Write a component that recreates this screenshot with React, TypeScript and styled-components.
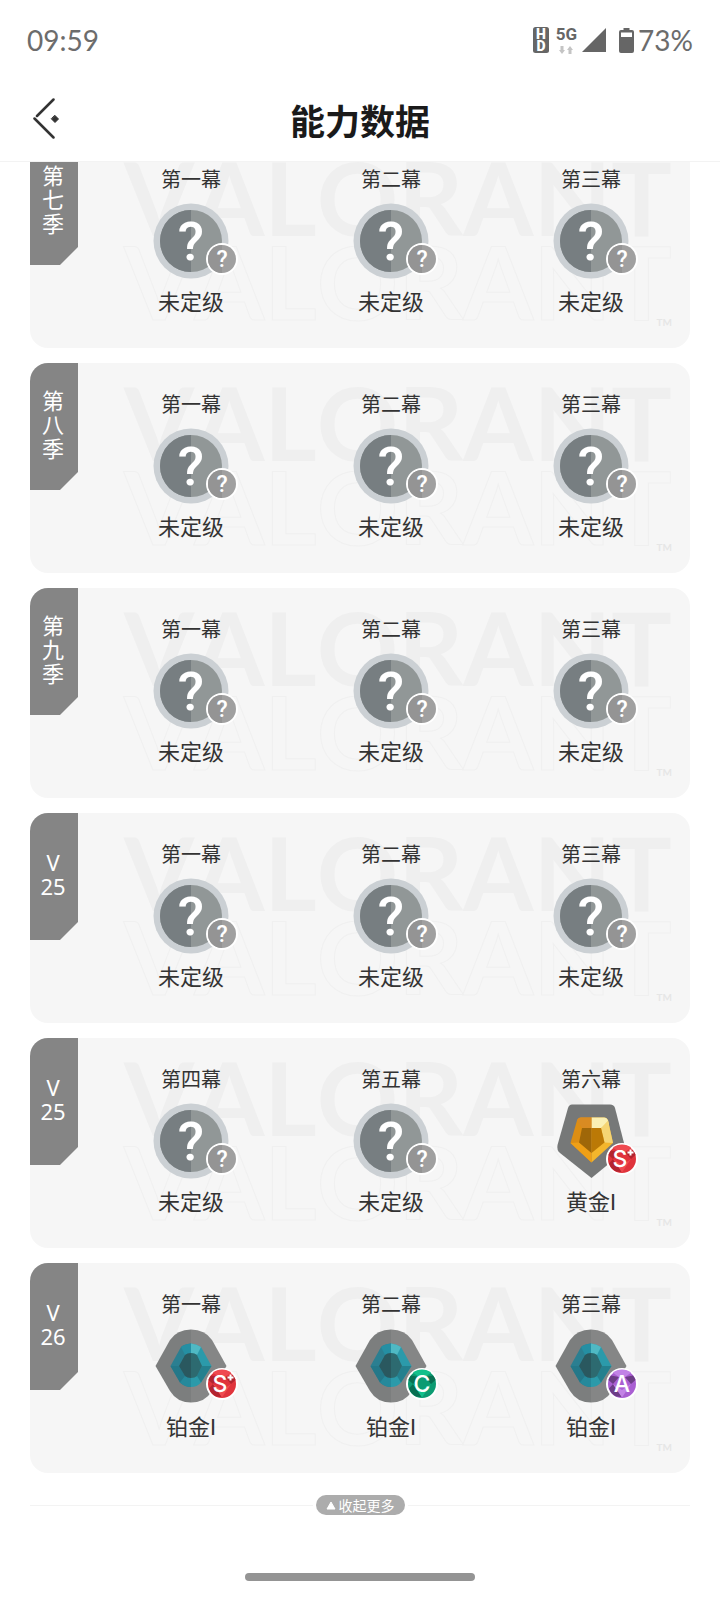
import React from "react";
import styled, { createGlobalStyle } from "styled-components";

const cjk = `"Noto Sans CJK SC", sans-serif`;

const GlobalStyle = createGlobalStyle`
  *, *::before, *::after { box-sizing: border-box; }
  body { margin: 0; background: #fff; color: #333; font-family: ${cjk}; }
  h1, h2, p { margin: 0; font-weight: 400; }
  svg { display: block; }
`;

const Screen = styled.div`
  min-height: 100vh;
  display: flex;
  flex-direction: column;
  background: #fff;
`;

const StatusBar = styled.div`
  display: flex;
  align-items: center;
  justify-content: space-between;
  height: 80px;
  padding: 0 27px;
  font-family: Lato, sans-serif;
  font-size: 28px;
  line-height: 34px;
  color: #6c6c6c;
`;

const StatusIcons = styled.div`
  display: flex;
  align-items: center;
`;

const Network = styled.div`
  display: flex;
  flex-direction: column;
  align-items: center;
  gap: 4px;
  margin: 0 5px 0 7px;
  font: 700 17px/15px Roboto, sans-serif;
  color: #666;
`;

const Battery = styled.div`
  display: flex;
  align-items: center;
  gap: 4px;
  margin-left: 13px;
`;

const Header = styled.header`
  display: grid;
  grid-template-columns: 60px 1fr 60px;
  align-items: center;
  height: 82px;
  padding: 0 16px 2px;
  border-bottom: 1px solid #f3f3f3;
`;

const BackButton = styled.button`
  width: 60px;
  height: 60px;
  padding: 0 15px 2px;
  border: 0;
  background: none;
  cursor: pointer;
`;

const Title = styled.h1`
  text-align: center;
  font-size: 35px;
  line-height: 44px;
  font-weight: 700;
  color: #1a1a1a;
`;

const Scroller = styled.main`
  overflow: hidden;
  padding: 0 30px;
`;

const SeasonList = styled.div`
  display: flex;
  flex-direction: column;
  gap: 15px;
  margin-top: -24px;
`;

const Card = styled.section`
  position: relative;
  display: flex;
  align-items: flex-start;
  gap: 13px;
  min-height: 210px;
  border-radius: 18px;
  background: #f6f6f6;
  overflow: hidden;
`;

const Tab = styled.h2`
  position: relative;
  display: flex;
  flex-direction: column;
  align-items: center;
  justify-content: center;
  flex: none;
  width: 48px;
  height: 127px;
  padding: 0 2px 6px 0;
  background: #858585;
  clip-path: polygon(0 0, 100% 0, 100% calc(100% - 18px), calc(100% - 18px) 100%, 0 100%);
  color: #fff;
  font-family: "Noto Sans", ${cjk};
  font-size: 22px;
  line-height: 24px;
`;

const Acts = styled.div`
  position: relative;
  flex: 1;
  display: grid;
  grid-template-columns: repeat(3, 1fr);
  padding-top: 27px;
  margin-right: -1px;
`;

const Act = styled.div`
  display: flex;
  flex-direction: column;
  align-items: center;
`;

const ActName = styled.p`
  font-size: 20px;
  line-height: 28px;
`;

const RankName = styled.p`
  margin-top: 8px;
  font-family: Roboto, ${cjk};
  font-size: 22px;
  line-height: 32px;
`;

const Emblem = styled.div`
  position: relative;
  width: 76px;
  height: 76px;
  margin-top: 10px;
`;

const Grade = styled.div`
  position: absolute;
  right: -9px;
  bottom: 4px;
`;

const Watermark = styled.div`
  position: absolute;
  inset: 17px 18px auto 94px;
  color: #efefef;
  font: 700 101px/84px Lato, sans-serif;
  font-kerning: none;
  white-space: nowrap;
`;

const WatermarkRow = styled.div<{ $outlined?: boolean }>`
  height: 84px;
  ${(p) => p.$outlined && `color: #f6f6f6; -webkit-text-stroke: 1px #f0f0f0;`}
`;

const Trademark = styled.div`
  text-align: right;
  font-size: 10px;
  line-height: 10px;
  margin-top: -6px;
  color: #e6e6e6;
`;

const Footer = styled.div`
  display: flex;
  align-items: center;
  gap: 3px;
  margin-top: 22px;
`;

const Rule = styled.div`
  flex: 1;
  height: 1px;
  background: #f3f3f3;
`;

const CollapseButton = styled.button`
  display: flex;
  align-items: center;
  justify-content: center;
  gap: 3px;
  height: 20px;
  padding: 0 10px;
  border: 0;
  border-radius: 10px;
  background: #acacac;
  color: #fff;
  font-family: ${cjk};
  font-size: 14px;
  line-height: 20px;
  cursor: pointer;
`;

const HomeBar = styled.div`
  width: 32%;
  height: 8px;
  margin: auto auto 19px;
  border-radius: 4px;
  background: #949494;
`;

type Rank = "none" | "gold" | "platinum";
type GradeKind = "?" | "S+" | "C" | "A";
interface ActData {
  name: string;
  rank: Rank;
  grade: GradeKind;
}

const rankNames: Record<Rank, string> = { none: "未定级", gold: "黄金I", platinum: "铂金I" };

const act = (name: string, rank: Rank = "none", grade: GradeKind = "?"): ActData => ({ name, rank, grade });
const firstThree = () => [act("第一幕"), act("第二幕"), act("第三幕")];

const seasons: { label: string[]; acts: ActData[] }[] = [
  { label: ["第", "七", "季"], acts: firstThree() },
  { label: ["第", "八", "季"], acts: firstThree() },
  { label: ["第", "九", "季"], acts: firstThree() },
  { label: ["V", "25"], acts: firstThree() },
  { label: ["V", "25"], acts: [act("第四幕"), act("第五幕"), act("第六幕", "gold", "S+")] },
  {
    label: ["V", "26"],
    acts: [act("第一幕", "platinum", "S+"), act("第二幕", "platinum", "C"), act("第三幕", "platinum", "A")],
  },
];

function UnrankedEmblem() {
  return (
    <svg width="76" height="76" viewBox="0 0 76 76">
      <circle cx="38" cy="38" r="37.5" fill="#cbd0d4" />
      <circle cx="38" cy="38" r="31" fill="#919797" />
      <path d="M38 7a31 31 0 0 0 0 62z" fill="#777e81" />
      <text x="38" y="57" textAnchor="middle" fontFamily="Roboto, sans-serif" fontWeight="500" fontSize="54" fill="#fff">
        ?
      </text>
    </svg>
  );
}

function GoldEmblem() {
  return (
    <svg width="76" height="76" viewBox="0 0 76 76">
      <path d="M19 1.5H57Q61 1.5 62 5L71.5 42Q72.5 47 69 50L38.5 75 7 50Q3.500 47 4.500 42L15 5Q16 1.500 19 1.500Z" fill="#767878" />
      <path d="M28 14.500H38.500V59.500L17.500 40 24 17.500Q25 14.500 28 14.500Z" fill="#dd8e13" />
      <path d="M38.500 14.500H51Q54 14.500 55 17.500L60 40 38.500 59.500Z" fill="#f4b62c" />
      <path d="M38.500 14.500H51Q54 14.500 55 17.500L56 22 48 25H38.500Z" fill="#faf0b4" />
      <path d="M55 17.500 60 40 51.500 39.500 48 25Z" fill="#f5d574" />
      <path d="M28 14.500H38.500V25H29L24 17.500Q25 14.500 28 14.500Z" fill="#d98b22" />
      <path d="M17.500 40 26 39.500 38.500 50V59.500Z" fill="#ef9f16" />
      <path d="M29 25H38.500V50L26 39.500Z" fill="#9f6709" />
      <path d="M38.500 25H48L51.500 39.500 38.500 50Z" fill="#bb7906" />
    </svg>
  );
}

function PlatinumEmblem() {
  return (
    <svg width="76" height="76" viewBox="0 0 76 76">
      <path d="M38 1.500Q24 1.500 17 12L2.500 38 17 63Q24 74.500 38 74.500Z" fill="#7c7e7e" />
      <path d="M38 1.500Q52 1.500 59 12L73.500 38 59 63Q52 74.500 38 74.500Z" fill="#858686" />
      <path d="M38 15.500Q31 16 28 19L17.500 38 27 54.500Q32 59 38 59Z" fill="#2b7f91" />
      <path d="M38 15.500Q44 16 48 19L58.500 38 48 54.500Q44 59 38 59Z" fill="#2b9aaa" />
      <path d="M38 15.500Q44 16 48 19L44 27 38 25Z" fill="#4fb9c4" />
      <path d="M38 15.500Q31 16 28 19L32 27 38 25Z" fill="#258fa3" />
      <path d="M17.500 38H26L32 48 27 54.500Z" fill="#247889" />
      <path d="M58.500 38H49L44 48 48 54.500Z" fill="#24808e" />
      <path d="M27 54.500 32 48 38 50V59Q32 59 27 54.500Z" fill="#26899b" />
      <path d="M38 25Q34 25 32 27L26 38 32 48Q34 50 38 50Z" fill="#2a585f" />
      <path d="M38 25Q42 25 44 27L49 38 44 48Q42 50 38 50Z" fill="#2d6a70" />
    </svg>
  );
}

const emblems = { none: UnrankedEmblem, gold: GoldEmblem, platinum: PlatinumEmblem };

const gradePaint: Record<GradeKind, [string, string, string]> = {
  "?": ["#a0a0a0", "#949494", "#949494"],
  "S+": ["#e0343c", "#b3242f", "#ef4a50"],
  C: ["#0c9b72", "#087052", "#12c08b"],
  A: ["#a95fd2", "#6d3d86", "#c283e6"],
};

function GradeIcon({ kind }: { kind: GradeKind }) {
  const [base, dark, light] = gradePaint[kind];
  return (
    <svg width="32" height="32" viewBox="0 0 32 32">
      <circle cx="16" cy="16" r="16" fill="#fff" />
      <circle cx="16" cy="16" r="14" fill={base} />
      {kind === "?" ? (
        <path d="M16 2a14 14 0 0 0 0 28z" fill={dark} />
      ) : (
        <>
          <path d="M5 7.500 13 9 7 16 2.500 12A14 14 0 0 1 5 7.500Z" fill={dark} />
          <path d="M27 7.500 19 9 25 16 29.500 12A14 14 0 0 0 27 7.500Z" fill={dark} />
          <path d="M7 16 16 29 10 28.500A14 14 0 0 1 3 20.500Z" fill={dark} />
          <path d="M7 16 16 22 25 16 16 29.500Z" fill={light} />
          <path d="M13 9H19L25 4.800A14 14 0 0 0 7 4.800Z" fill={light} />
        </>
      )}
      <text
        x={kind === "S+" ? 14 : 16}
        y="24"
        textAnchor="middle"
        fontFamily={kind === "?" ? "Roboto, sans-serif" : "Inter, sans-serif"}
        fontWeight="500"
        fontSize="23"
        fill="#fff"
      >
        {kind[0]}
      </text>
      {kind === "S+" && <path d="M24.500 6.500V12.500M21.500 9.500H27.500" stroke="#fff" strokeWidth="2" />}
    </svg>
  );
}

function CardWatermark() {
  return (
    <Watermark aria-hidden="true">
      <WatermarkRow>VALORANT</WatermarkRow>
      <WatermarkRow $outlined>VALORANT</WatermarkRow>
      <Trademark>TM</Trademark>
    </Watermark>
  );
}

export default function App() {
  return (
    <Screen>
      <GlobalStyle />
      <StatusBar>
        <span>09:59</span>
        <StatusIcons>
          <svg width="16" height="26" viewBox="0 0 16 26">
            <rect width="16" height="26" rx="2.500" fill="#666" />
            <g fill="#fff" fontFamily="Roboto, sans-serif" fontWeight="900" fontSize="14" textAnchor="middle">
              <text x="8" y="12">H</text>
              <text x="8" y="24">D</text>
            </g>
          </svg>
          <Network>
            <span>5G</span>
            <svg width="14" height="8" viewBox="0 0 14 8">
              <path d="M3 8 0 4H1.500V0H4.500V4H6ZM11 0 14 4H12.500V8H9.500V4H8Z" fill="#c4c4c4" />
            </svg>
          </Network>
          <svg width="24" height="24" viewBox="0 0 24 24">
            <path d="M24 0V24H0Z" fill="#666" />
          </svg>
          <Battery>
            <svg width="15" height="25" viewBox="0 0 15 25">
              <path d="M4.500 0H10.500V2H13Q15 2 15 4V23Q15 25 13 25H2Q0 25 0 23V4Q0 2 2 2H4.500Z" fill="#666" />
              <path d="M2 4.500H13V9H2Z" fill="#fff" />
            </svg>
            <span>73%</span>
          </Battery>
        </StatusIcons>
      </StatusBar>
      <Header>
        <BackButton aria-label="返回">
          <svg width="28" height="42" viewBox="0 0 28 42" stroke="#333" strokeWidth="2.500" strokeLinecap="round">
            <path d="M22.500 1.500 6 18M3.500 20.500 22.500 39.500" fill="none" />
            <path d="M24 17.500 27.500 21 24 24.500 20.500 21Z" fill="#333" strokeWidth="1" />
          </svg>
        </BackButton>
        <Title>能力数据</Title>
      </Header>
      <Scroller>
        <SeasonList>
          {seasons.map((season, i) => (
            <Card key={i}>
              <CardWatermark />
              <Tab>
                {season.label.map((line) => (
                  <span key={line}>{line}</span>
                ))}
              </Tab>
              <Acts>
                {season.acts.map(({ name, rank, grade }) => {
                  const Icon = emblems[rank];
                  return (
                    <Act key={name}>
                      <ActName>{name}</ActName>
                      <Emblem>
                        <Icon />
                        <Grade>
                          <GradeIcon kind={grade} />
                        </Grade>
                      </Emblem>
                      <RankName>{rankNames[rank]}</RankName>
                    </Act>
                  );
                })}
              </Acts>
            </Card>
          ))}
        </SeasonList>
        <Footer>
          <Rule />
          <CollapseButton>
            <svg width="10" height="9" viewBox="0 0 10 9">
              <path d="M5 1 9 8H1Z" fill="#fff" stroke="#fff" strokeLinejoin="round" />
            </svg>
            收起更多
          </CollapseButton>
          <Rule />
        </Footer>
      </Scroller>
      <HomeBar />
    </Screen>
  );
}
